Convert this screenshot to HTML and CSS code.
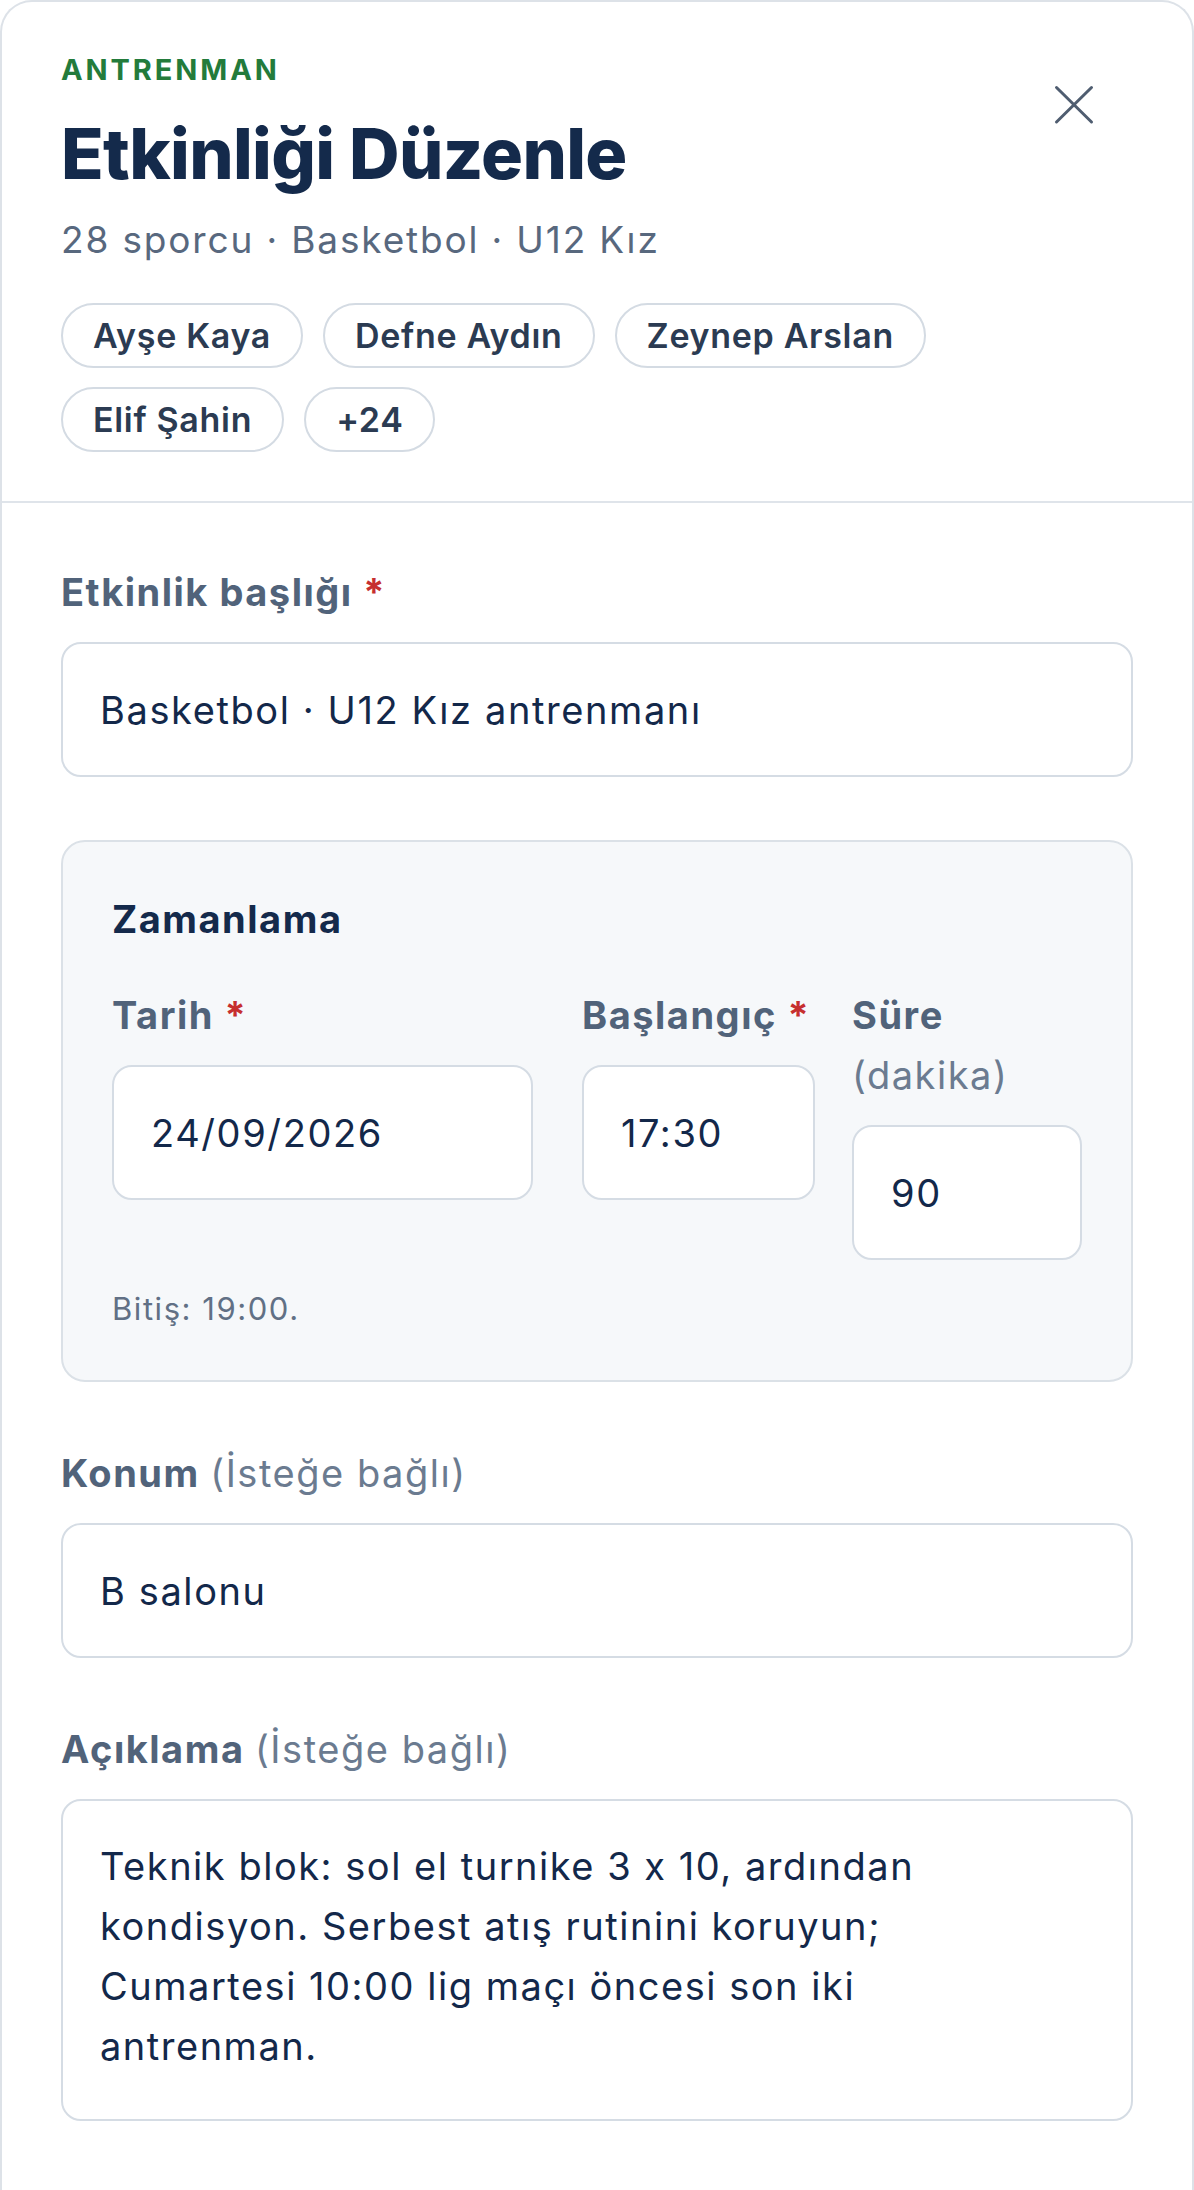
FILE: index.html
```html
<!DOCTYPE html>
<html lang="tr">
<head>
	<meta charset="UTF-8">
	<title>Etkinliği Düzenle</title>
	<link rel="stylesheet" href="styles.css">
</head>
<body>
	<div class="sheet">
		<header class="sheet-head">
			<div class="head-text">
				<div class="eyebrow">ANTRENMAN</div>
				<h1 class="title">Etkinliği Düzenle</h1>
				<p class="meta">28 sporcu · Basketbol · U12 Kız</p>
				<ul class="chips">
					<li class="chip">Ayşe Kaya</li>
					<li class="chip">Defne Aydın</li>
					<li class="chip">Zeynep Arslan</li>
					<li class="chip">Elif Şahin</li>
					<li class="chip">+24</li>
				</ul>
			</div>
			<button class="close" type="button" aria-label="Kapat">
				<svg width="48" height="48" viewBox="0 0 48 48" fill="none" stroke="#4f5d70" stroke-width="3" stroke-linecap="round">
					<line x1="6.5" y1="6.5" x2="41.5" y2="41"/>
					<line x1="41.5" y1="6.5" x2="6.5" y2="41"/>
				</svg>
			</button>
		</header>

		<form class="sheet-body">
			<div class="field">
				<label class="label" for="title">Etkinlik başlığı <span class="req">*</span></label>
				<input class="input" id="title" type="text" value="Basketbol · U12 Kız antrenmanı">
			</div>

			<section class="timing">
				<h2>Zamanlama</h2>
				<div class="timing-grid">
					<div class="field field-date">
						<label class="label" for="date">Tarih <span class="req">*</span></label>
						<input class="input" id="date" type="text" value="24/09/2026">
					</div>
					<div class="field">
						<label class="label" for="start">Başlangıç <span class="req">*</span></label>
						<input class="input" id="start" type="text" value="17:30">
					</div>
					<div class="field">
						<label class="label" for="dur">Süre <span class="opt unit">(dakika)</span></label>
						<input class="input" id="dur" type="text" value="90">
					</div>
				</div>
				<p class="hint">Bitiş: 19:00.</p>
			</section>

			<div class="field field-gap">
				<label class="label" for="loc">Konum <span class="opt">(İsteğe bağlı)</span></label>
				<input class="input" id="loc" type="text" value="B salonu">
			</div>

			<div class="field field-gap">
				<label class="label" for="desc">Açıklama <span class="opt">(İsteğe bağlı)</span></label>
				<textarea class="input textarea" id="desc">Teknik blok: sol el turnike 3 x 10, ardından kondisyon. Serbest atış rutinini koruyun; Cumartesi 10:00 lig maçı öncesi son iki antrenman.</textarea>
			</div>
		</form>
	</div>
</body>
</html>
```

FILE: styles.css
```css
* {
	box-sizing: border-box;
	padding: 0;
	margin: 0;
}
body {
	font-family: "Inter", "Noto Sans", sans-serif;
	font-feature-settings: "calt" 0;
	background-color: #fff;
	color: #142a4b;
}
.sheet {
	min-height: 2190px;
	border: 2px solid #dde2e8;
	border-bottom: none;
	border-radius: 32px 32px 0 0;
	background-color: #fff;
}
.sheet-head {
	display: flex;
	align-items: flex-start;
	padding: 50px 94px 49px 59px;
	border-bottom: 2px solid #dfe4ea;
}
.head-text {
	flex: 1;
}
.eyebrow {
	font-size: 29px;
	line-height: 36px;
	font-weight: 700;
	letter-spacing: 0.1em;
	color: #237b3b;
}
.title {
	margin-top: 24px;
	font-size: 70px;
	line-height: 84px;
	font-weight: 800;
	letter-spacing: -0.01em;
	color: #142a4b;
}
.meta {
	margin-top: 22px;
	font-size: 37px;
	line-height: 44px;
	letter-spacing: 0.05em;
	color: #58687e;
}
.chips {
	display: flex;
	flex-wrap: wrap;
	gap: 19px 20px;
	margin-top: 41px;
	list-style: none;
}
.chip {
	height: 65px;
	padding: 0 30px;
	border: 2px solid #d4dbe3;
	border-radius: 999px;
	font-size: 34px;
	line-height: 61px;
	font-weight: 600;
	letter-spacing: 0.02em;
	color: #2b3b52;
}
.close {
	width: 48px;
	height: 48px;
	margin-top: 29px;
	border: none;
	background: none;
	cursor: pointer;
}
.close svg {
	display: block;
}

.sheet-body {
	padding: 59px 59px 67px 59px;
}
.label {
	display: block;
	margin-bottom: 20px;
	font-size: 38px;
	line-height: 60px;
	font-weight: 700;
	letter-spacing: 0.04em;
	color: #51637a;
}
.req {
	color: #c62f2f;
}
.opt {
	font-weight: 400;
	color: #6b7b90;
}
.unit {
	display: block;
}
.input {
	display: block;
	width: 100%;
	height: 135px;
	padding: 0 37px;
	border: 2px solid #d5dce4;
	border-radius: 20px;
	background-color: #fff;
	font-family: inherit;
	font-feature-settings: "calt" 0;
	font-size: 38px;
	letter-spacing: 0.042em;
	color: #13284a;
	outline: none;
}
.textarea {
	height: 322px;
	padding: 35px 140px 35px 37px;
	line-height: 60px;
	letter-spacing: 0.04em;
	resize: none;
	overflow: hidden;
}

.timing {
	margin-top: 63px;
	padding: 47px 49px 48px;
	border: 2px solid #dbe1e7;
	border-radius: 24px;
	background-color: #f6f8fa;
}
.timing h2 {
	font-size: 38px;
	line-height: 60px;
	font-weight: 700;
	letter-spacing: 0.04em;
	color: #142a4b;
}
.timing-grid {
	display: grid;
	grid-template-columns: 433px 233px 230px;
	column-gap: 37px;
	align-items: start;
	margin-top: 36px;
}
.field-date .input {
	width: 421px;
}
.hint {
	margin-top: 26px;
	font-size: 31px;
	line-height: 46px;
	letter-spacing: 0.05em;
	color: #617085;
}
.field-gap {
	margin-top: 61px;
}
```
